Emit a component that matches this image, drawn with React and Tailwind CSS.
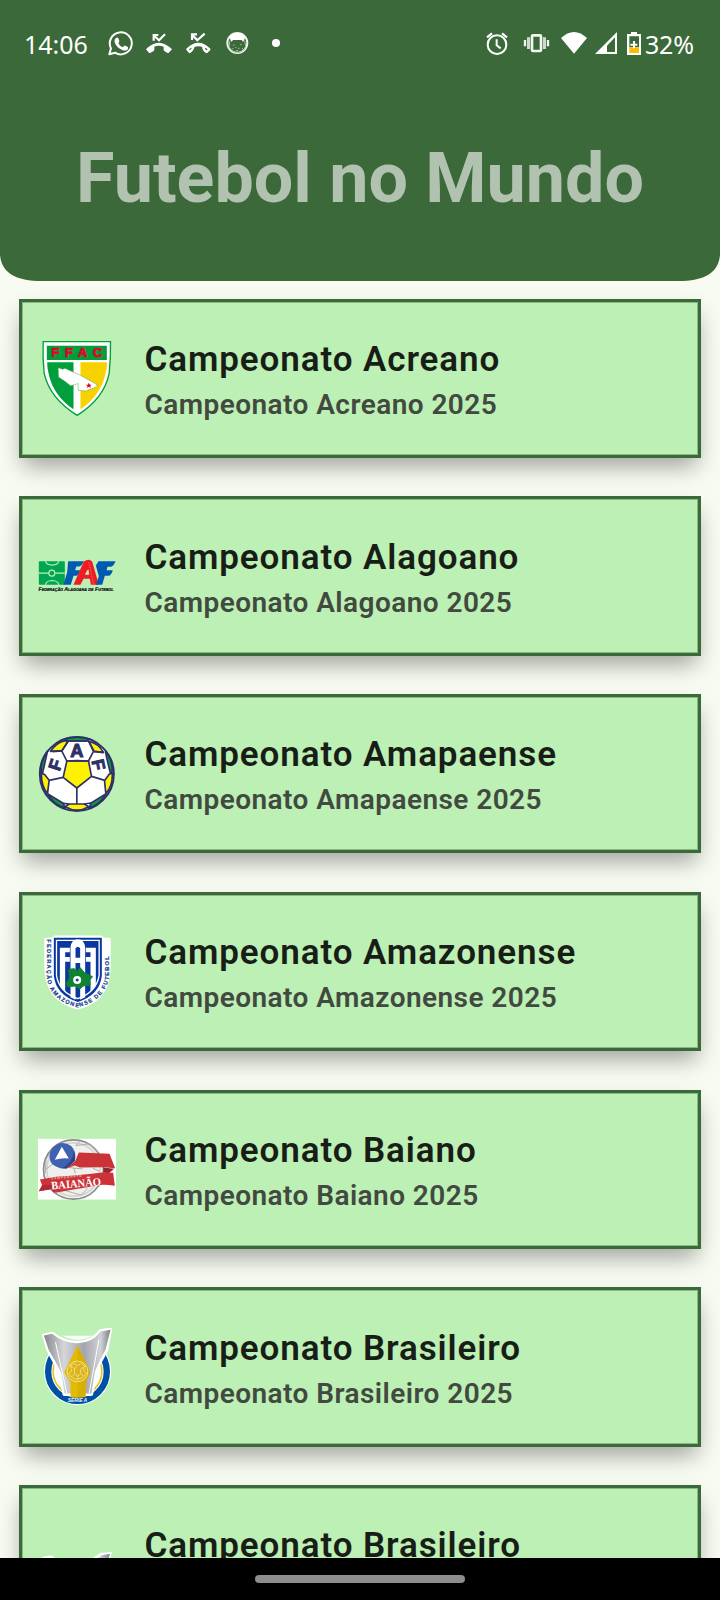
import React from "react";

function StatusIcon({ box, className, children }) {
  return (
    <svg viewBox={box} className={"h-[70px] shrink-0 " + className} fill="none" stroke="none">
      {children}
    </svg>
  );
}

function StatusBar() {
  return (
    <div className="flex h-[80px] items-center pt-[10px] text-white">
      <span className="ml-[24px] w-[74px] whitespace-nowrap pb-[2px] font-['Noto_Sans',sans-serif] text-[25px] leading-[68px] tracking-[0px]">14:06</span>
      <StatusIcon box="318 0 90 210" className="ml-[8px] w-[30px]">
        <path d="M328 133 L333 115 A33 33 0 1 1 345 128 Z" stroke="#fff" strokeWidth="6" strokeLinejoin="round" />
        <path d="M348 84 q5 -3 7 1 l3 8 q1 3 -3 7 q5 9 13 12 l4 -4 q2 -2 4 -1 l8 4 q2 5 -2 8 q-6 5 -15 1 q-16 -6 -22 -20 q-4 -10 3 -16 Z" fill="#fff" />
      </StatusIcon>
      <StatusIcon box="432 0 90 210" className="ml-[8px] w-[30px]">
        <path d="M438 118 Q476 78 516 118 L505 130 Q496 127 491 121 L491 110 Q476 104 463 110 L463 121 Q457 127 448 130 Z" fill="#fff" />
        <path d="M461 92 V75 H475 M461 76 L477 91 L495 73" stroke="#fff" strokeWidth="6.5" />
      </StatusIcon>
      <StatusIcon box="552 0 90 210" className="ml-[10px] w-[30px]">
        <path d="M562 118 Q595 86 628 118 L620 126 Q611 121 609 108 Q595 102 581 108 Q578 121 569 126 Z" stroke="#fff" strokeWidth="7" strokeLinejoin="round" />
        <path d="M576 90 V73 H591 M576 74 L592 91 L614 71" stroke="#fff" strokeWidth="6.5" />
      </StatusIcon>
      <StatusIcon box="672 0 90 210" className="ml-[10px] w-[30px]">
        <circle cx="712" cy="99" r="30" stroke="#f0f5ef" strokeWidth="6" />
        <path d="M688 80 Q695 69 712 69 Q730 69 736 80 L731 94 Q727 95 725 90 H699 Q697 95 693 94 Z" fill="#fff" />
        <path d="M690 92 L687 109 Q692 126 712 128 Q732 126 737 109 L734 92" stroke="#a9c0a8" strokeWidth="3" />
        <path d="M699 105 h4 M721 104 h4 M706 112 h3 M714 115 h4 M697 116 h3 M726 116 h3 M708 122 h6" stroke="#b9ccb8" strokeWidth="3" />
      </StatusIcon>
      <StatusIcon box="810 0 36 210" className="ml-[16px] w-[12px]">
        <circle cx="828" cy="99" r="12" fill="#fff" />
      </StatusIcon>
      <StatusIcon box="72 0 78 210" className="ml-auto w-[26px]">
        <circle cx="111" cy="104" r="28" stroke="#fff" strokeWidth="6" />
        <path d="M110 88 V106 L122 115" stroke="#fff" strokeWidth="6" />
        <path d="M81 82 L96 70 M141 82 L126 70" stroke="#fff" strokeWidth="6.5" />
      </StatusIcon>
      <StatusIcon box="186 0 87 210" className="ml-[12px] w-[29px]">
        <rect x="216" y="76" width="27" height="47" rx="3" stroke="#f3f7f2" strokeWidth="8" />
        <path d="M205.500 82 V117 M253.500 82 V117" stroke="#cddacc" strokeWidth="9" />
        <path d="M195 90 V109 M264 90 V109" stroke="#f3f7f2" strokeWidth="7" />
      </StatusIcon>
      <StatusIcon box="297 0 90 210" className="ml-[8px] w-[30px]">
        <path d="M303 84 Q342 48 381 84 L342 131 Z" fill="#fff" />
      </StatusIcon>
      <StatusIcon box="402 0 75 210" className="ml-[5px] w-[25px]">
        <path d="M405 132 L471 66 V132 Z M441 107 V126 H465 V82 Z" fill="#fff" fillRule="evenodd" />
      </StatusIcon>
      <StatusIcon box="498 0 48 210" className="ml-[7px] w-[16px]">
        <path d="M501 72 H513 V66 H531 V72 H543 V135 H501 Z" fill="#fff" />
        <path d="M508 79 H537 V112 H508 Z" fill="#3b6939" />
        <path d="M508 112 H537 V129 H508 Z" fill="#fdbb05" />
        <path d="M519 93 h6 v8 h7 v6 h-7 v8 h-6 v-8 h-8 v-6 h8 Z" fill="#fff" />
      </StatusIcon>
      <span className="ml-[3px] w-[75px] whitespace-nowrap pb-[2px] font-['Noto_Sans',sans-serif] text-[25px] leading-[68px] tracking-[-0.2px]">32%</span>
    </div>
  );
}

function AcreLogo() {
  return (
    <svg viewBox="7.5 15 234 234" className="block h-[78px] w-[78px]">
      <path d="M23 23 H225 Q226 70 221 118 Q206 193 125 244 Q43 193 26 118 Q21 70 23 23 Z" fill="#fff" stroke="#009f3c" strokeWidth="4" />
      <path d="M34 35 H214 V78 H34 Z" fill="#009f3c" />
      <path d="M35 85 H114 V226 Q55 186 40 122 Q35 104 35 85 Z" fill="#009f3c" />
      <path d="M135 85 H215 Q215 105 209 124 Q193 187 135 226 Z" fill="#f7d100" />
      <path d="M68 101 L82 106 L88 103 L135 124 L187 153 L176 162 L150 171 L128 169 V149 L105 155 L88 142 L69 129 Z" fill="#fff" stroke="#4b9b3c" strokeWidth="2" strokeDasharray="4 2" />
      <path d="M160 146 l3 6 h6 l-5 4 l2 6 l-6 -4 l-6 4 l2 -6 l-5 -4 h6 Z" fill="#e3002b" />
      <text x="47" y="70" textLength="154" className="font-['Liberation_Sans',sans-serif] text-[40px] font-bold" fill="#e3002b" stroke="#e3002b" strokeWidth="2">FFAC</text>
    </svg>
  );
}

function AlagoasLogo() {
  return (
    <svg viewBox="25.5 -9.4 234 234" className="block h-[78px] w-[78px]">
      <rect x="28" y="63" width="78" height="71" rx="3" fill="#00a651" />
      <g fill="none" stroke="#bdf0b5" strokeWidth="3.5">
        <path d="M28 99 H58 M77 99 H106 M48 63 Q50 74 68 75 Q86 74 88 63 M48 134 Q50 122 68 121 Q86 122 88 134" />
        <circle cx="67" cy="99" r="9" />
      </g>
      <path d="M116 63 H163 Q157 78 148 79 H140 L137 90 H152 Q147 106 140 107 H132 L124 134 H102 L113 96 Z" fill="#0059b3" />
      <path d="M132 134 L163 64 Q178 54 188 64 L208 134 H184 L181 116 H162 L153 134 Z M173 90 L166 104 H179 L177 88 Z" fill="#ee1c25" fillRule="evenodd" />
      <path d="M178 66 L192 132" stroke="#f7b8a8" strokeWidth="1.5" strokeDasharray="4 3" />
      <path d="M207 63 H258 Q252 79 243 80 H234 L231 90 H250 Q245 106 237 107 H226 L218 134 H199 L208 108 L199 76 Z" fill="#0059b3" />
      <text x="27" y="152" textLength="225" lengthAdjust="spacingAndGlyphs" className="font-['Liberation_Sans',sans-serif] text-[17px] font-bold italic [font-variant-caps:small-caps]" fill="#10131c" stroke="#10131c" strokeWidth="0.7">Federação Alagoana de Futebol</text>
    </svg>
  );
}

function AmapaLogo() {
  return (
    <svg viewBox="25.5 29 234 234" className="block h-[78px] w-[78px]">
      <circle cx="142" cy="146" r="112" fill="#fff" />
      <g stroke="#2e3069" strokeWidth="5" strokeLinejoin="round">
        <path d="M104 41 Q142 29 181 41 L172 47 H114 Z M37 153 Q28 112 54 77 L49 100 Z M245 153 Q256 112 228 79 L232 100 Z M54 205 Q72 238 107 248 L101 234 Z M230 205 Q212 238 178 248 L185 233 Z" fill="#119b3b" />
        <path d="M63 78 Q80 52 107 46 L115 49 L97 76 Z M178 49 Q205 52 222 81 L194 78 Z M36 143 L46 148 L59 165 L54 205 Q34 180 36 143 Z M248 143 L239 147 L225 166 L229 205 Q251 180 248 143 Z M107 244 L119 236 H164 L178 244 Q142 265 107 244 Z" fill="#fff200" />
        <path d="M112 107 L142 106 L177 107 L186 153 L142 188 L101 156 Z" fill="#fff200" />
      </g>
      <path d="M116 47 L97 77 L112 107 M178 48 L192 78 L177 107 M101 156 L59 165 M186 153 L226 165 M142 188 V235 M115 47 H178 M97 77 L70 79 M192 78 L222 82 M112 107 H177 M119 236 L101 234 M163 236 L185 233" fill="none" stroke="#2e3069" strokeWidth="5" />
      <circle cx="142" cy="146" r="111" fill="none" stroke="#2e3069" strokeWidth="6" />
      <g className="font-['Liberation_Sans',sans-serif] text-[52px] font-bold" fill="#2e3069" stroke="#2e3069" strokeWidth="3" textAnchor="middle">
        <text x="142" y="96" className="text-[55px]">A</text>
        <text transform="translate(95 124) rotate(-72)" x="0" y="0">F</text>
        <text transform="translate(189 122) rotate(78)" x="0" y="0">F</text>
      </g>
    </svg>
  );
}

function AmazonasLogo() {
  return (
    <svg viewBox="25.5 22 234 234" className="block h-[78px] w-[78px]">
      <path d="M48 40 H69 L77 33 H214 L222 40 H240 V125 Q240 225 145 248 Q49 226 48 125 Z" fill="#fff" stroke="#fff" strokeWidth="7" strokeLinejoin="round" />
      <path d="M73 36 H217 V150 Q211 207 145 229 Q79 207 73 150 Z" fill="#0b37a0" />
      <path d="M81 44 H209 V149 Q201 199 145 219 Q88 199 81 149 Z" fill="none" stroke="#fff" strokeWidth="4" />
      <path d="M91 66 H121 V80 H107 V94 H121 V108 H107 V196 L91 180 Z M199 66 H169 V80 H183 V94 H169 V108 H183 V196 L199 180 Z" fill="#fff" />
      <path d="M123 215 V64 Q126 42 145 41 Q164 42 167 64 V215 L152 222 V112 H138 V222 Z M138 68 V96 H152 V68 Q145 58 138 68 Z" fill="#fff" fillRule="evenodd" />
      <path d="M118 131 L134 129 L143 137 L152 126 L165 141 L174 146 L189 153 L180 164 L182 178 L161 181 L151 190 L137 181 L115 183 L109 174 L120 158 Z" fill="#108332" stroke="#108332" strokeWidth="3" />
      <circle cx="143" cy="163" r="12" fill="#fff" />
      <path d="M143 158 l5 4 l-2 5 h-6 l-2 -5 Z" fill="#0b43a5" />
      <path id="faa-arc" d="M51 41 V145 Q55 224 145 245 Q231 224 240 145 V30" fill="none" />
      <text className="font-['Liberation_Sans',sans-serif] text-[17px] font-bold tracking-[3.6px]" fill="#153d91" stroke="#153d91" strokeWidth=".6">
        <textPath href="#faa-arc">FEDERAÇÃO AMAZONENSE DE FUTEBOL</textPath>
      </text>
    </svg>
  );
}

function BahiaLogo() {
  return (
    <svg viewBox="25.5 15.4 234 234" className="block h-[78px] w-[78px]">
      <rect x="25.5" y="42" width="234" height="182" fill="#fff" />
      <ellipse cx="132" cy="134" rx="90" ry="89" fill="#efefed" stroke="#8a8c8b" strokeWidth="5" />
      <ellipse cx="132" cy="134" rx="80" ry="80" fill="none" stroke="#d4d4d2" strokeWidth="5" />
      <path d="M139 62 L178 57 L207 82 M70 72 L50 103 L47 146 M72 116 L48 134 M90 122 L132 130 L160 132 M73 205 L99 195 L156 211 M155 211 L174 191 M132 128 L138 145 M190 130 L210 139 M152 49 L139 62" fill="none" stroke="#aeafad" strokeWidth="3" />
      <path d="M72 66 Q98 44 126 64 Q142 82 136 108 L112 131 L92 130 Q60 122 60 96 Q61 76 72 66 Z" fill="#3e61b1" />
      <path d="M134 78 L137 108 L110 131 L96 130 Q127 121 134 78 Z" fill="#2b4381" />
      <path d="M97 66 L118 101 Q97 98 76 105 Z" fill="#fff" />
      <path d="M148 83 L240 87 L257 130 L221 127 L151 128 L136 122 L110 131 L137 109 Z" fill="#cc3338" />
      <path d="M221 128 L254 132 L238 145 L222 144 Z" fill="#96262b" />
      <path d="M31 164 Q60 160 81 156 Q146 151 225 142 L251 144 L256 183 Q211 174 174 187 Q114 197 74 204 L64 193 L28 199 L38 181 Z" fill="#cc3338" />
      <path d="M28 199 L64 193 L74 204 L70 180 L38 181 Z" fill="#b02b30" />
      <text transform="translate(66 194) rotate(-5)" textLength="150" className="font-['Liberation_Serif',serif] text-[34px] font-bold" lengthAdjust="spacingAndGlyphs" fill="#fff">BAIANÃO</text>
      <text transform="translate(65 164) rotate(-5)" textLength="92" className="font-['Liberation_Sans',sans-serif] text-[9px] font-bold" fill="#f6c6c7">CAMPEONATO</text>
    </svg>
  );
}

function SilverGradient({ id }) {
  return (
    <linearGradient id={id} x1="0" x2="1">
      <stop offset="0" stopColor="#85868d" />
      <stop offset=".3" stopColor="#d5d6da" />
      <stop offset=".6" stopColor="#a4a5ac" />
      <stop offset=".85" stopColor="#d1d2d6" />
      <stop offset="1" stopColor="#7f8087" />
    </linearGradient>
  );
}

function BrasileiroLogo() {
  return (
    <svg viewBox="25.5 38.6 234 234" className="block h-[78px] w-[78px]">
      <defs>
        <SilverGradient id="silver-a" />
      </defs>
      <circle cx="144" cy="169" r="101" fill="#fff" />
      <circle cx="144" cy="169" r="88" fill="#fff" stroke="#0051a4" strokeWidth="19" />
      <circle cx="144" cy="169" r="73" fill="#fff" stroke="#e8c22b" strokeWidth="5" />
      <path d="M85 62 H200 V100 H85 Z" fill="#fff" />
      <path d="M80 50 Q144 98 208 50 L206 77 Q144 90 80 77 Z" fill="#bcf0b4" />
      <path d="M40 59 L69 52 Q109 83 145 79 Q185 79 211 45 L246 39 L234 105 L214 142 L200 170 L188 240 H102 L90 172 L74 145 L53 105 Z" fill="#fff" stroke="#fff" strokeWidth="5" strokeLinejoin="round" />
      <path d="M43 61 L68 56 Q103 85 145 84 Q187 84 213 49 L243 44 L228 104 L210 138 L196 170 L186 235 H105 L95 172 L78 140 L58 105 Z" fill="url(#silver-a)" />
      <path d="M78 81 L112 235 M208 74 L179 235" fill="none" stroke="#fff" strokeWidth="3" />
      <path d="M144 91 L183 171 L168 203 V250 H123 V203 L104 171 Z" fill="#e4bb00" />
      <path d="M144 91 L183 171 L168 203 V250 H144 Z" fill="#d8b100" />
      <circle cx="144" cy="169" r="31" fill="#dcb51c" stroke="#f4e38d" strokeWidth="3" />
      <path d="M123 151 L134 145 L144 151 L156 145 L166 154 L161 164 L170 175 L159 187 L145 193 L129 188 L118 177 L126 167 Z M123 151 L135 161 L144 151 M166 154 L153 162 M135 161 V176 L145 182 L154 175 L153 162 M135 176 L126 185 M154 175 L163 185 M145 182 V193" fill="none" stroke="#f5e89b" strokeWidth="3" strokeDasharray="5 2" />
      <path d="M84 236 Q144 260 205 236 L188 255 Q144 277 101 255 Z" fill="#0051a4" />
      <text x="115" y="261" textLength="58" className="font-['Liberation_Sans',sans-serif] text-[15px] font-bold italic" fill="#e9f4fb">SÉRIE A</text>
    </svg>
  );
}

function SerieBLogo() {
  return (
    <svg viewBox="0 0 78 78" className="block h-[78px] w-[78px]">
      <defs>
        <SilverGradient id="silver-b" />
      </defs>
      <path d="M4 31 L13 29.500 Q39 46 62 27 L74 26 L66 52 H12 Z" fill="#fff" />
      <path d="M6 33 L13 32 Q39 50 64 29 L72 28 L64 51 H14 Z" fill="url(#silver-b)" />
    </svg>
  );
}

const LEAGUES = [
  { name: "Campeonato Acreano", Logo: AcreLogo },
  { name: "Campeonato Alagoano", Logo: AlagoasLogo },
  { name: "Campeonato Amapaense", Logo: AmapaLogo },
  { name: "Campeonato Amazonense", Logo: AmazonasLogo },
  { name: "Campeonato Baiano", Logo: BahiaLogo },
  { name: "Campeonato Brasileiro", Logo: BrasileiroLogo },
  { name: "Campeonato Brasileiro", Logo: SerieBLogo },
];

function LeagueCard({ name, Logo }) {
  return (
    <div className="flex h-[159.25px] shrink-0 items-center border-[3px] border-[#3b6939] bg-[#bcf0b4] pl-[16px] shadow-[0_12px_22px_-4px_rgba(0,0,0,0.36),inset_0_0_0_1px_rgba(59,105,57,0.4)]">
      <Logo />
      <div className="ml-[28.5px] flex flex-col whitespace-nowrap pt-[7px] font-[Roboto,sans-serif]">
        <span className="text-[35px] leading-[46px] font-semibold tracking-[0.9px] text-[#191d17]">{name}</span>
        <span className="text-[28px] leading-[44px] font-semibold tracking-[0.44px] text-[#424940]">{name} 2025</span>
      </div>
    </div>
  );
}

export default function App() {
  return (
    <div className="flex h-[1600px] w-[720px] flex-col overflow-hidden bg-[#f7fbf1]">
      <header className="h-[281.3px] shrink-0 bg-[#3b6939] [clip-path:path('M0_0H720V255C718_276_700_281.3_673_281.3H47C20_281.3_2_276_0_255Z')]">
        <StatusBar />
        <h1 className="pt-[57px] text-center font-[Roboto,sans-serif] text-[70px] leading-[82px] font-bold text-[#b1c3b0]">Futebol no Mundo</h1>
      </header>
      <main className="flex min-h-0 flex-1 flex-col gap-[38.5px] overflow-hidden px-[19px] pt-[17.4px]">
        {LEAGUES.map((league, i) => (
          <LeagueCard key={i} {...league} />
        ))}
      </main>
      <div className="flex h-[42px] shrink-0 items-center justify-center bg-black">
        <div className="h-[8px] w-[210px] rounded-full bg-[#8c8c8c]" />
      </div>
    </div>
  );
}
